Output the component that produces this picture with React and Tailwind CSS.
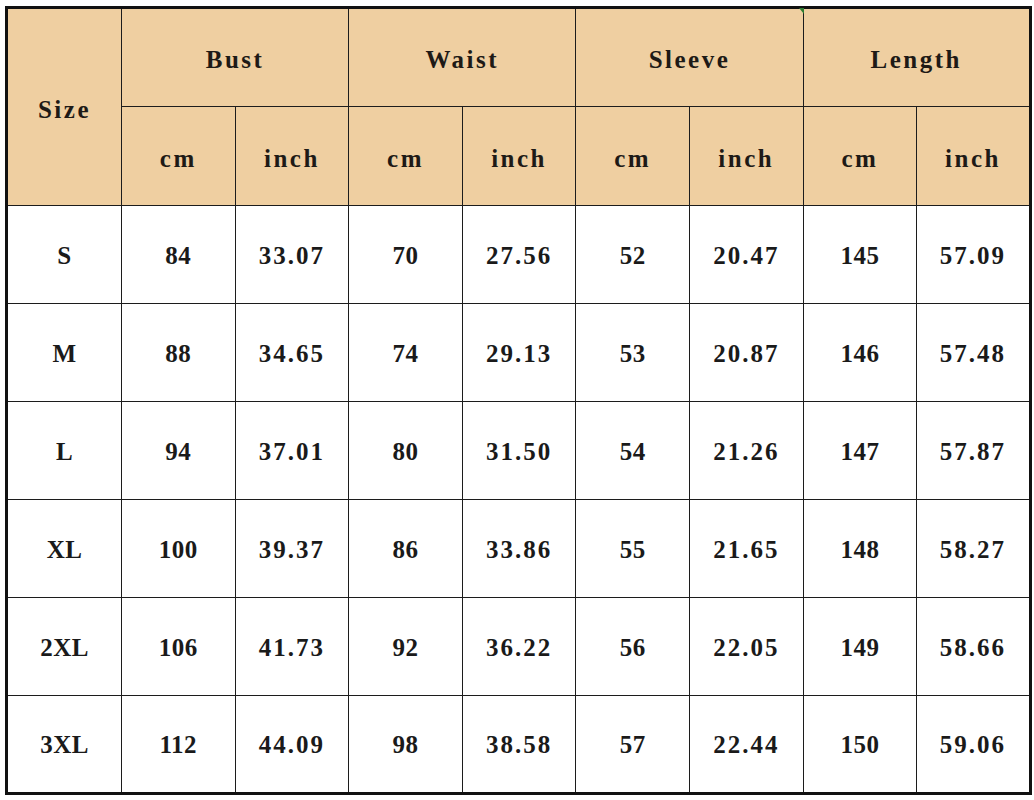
import React from 'react';

const rows = [
  ['S', '84', '33.07', '70', '27.56', '52', '20.47', '145', '57.09'],
  ['M', '88', '34.65', '74', '29.13', '53', '20.87', '146', '57.48'],
  ['L', '94', '37.01', '80', '31.50', '54', '21.26', '147', '57.87'],
  ['XL', '100', '39.37', '86', '33.86', '55', '21.65', '148', '58.27'],
  ['2XL', '106', '41.73', '92', '36.22', '56', '22.05', '149', '58.66'],
  ['3XL', '112', '44.09', '98', '38.58', '57', '22.44', '150', '59.06'],
];

const groups = ['Bust', 'Waist', 'Sleeve', 'Length'];

const cell = 'border border-[#1c1c1c] text-center align-middle';
const head = `${cell} bg-[#efcfa1] text-[25px] font-bold tracking-[2.5px] pt-[5px] text-[#1e1a16]`;

export default function App() {
  return (
    <div className="bg-white w-[1034px] h-[800px] pt-[6px] pl-[5px]" style={{ fontFamily: '"Liberation Serif", serif' }}>
      <div className="relative w-[1024px]">
        <table className="table-fixed border-collapse border-[3px] border-[#111] w-[1024px]">
          <colgroup>
            <col className="w-[115px]" />
            {Array.from({ length: 8 }).map((_, i) => (
              <col key={i} className="w-[113.6px]" />
            ))}
          </colgroup>
          <thead>
            <tr className="h-[99px]">
              <th rowSpan={2} className={head}>Size</th>
              {groups.map((g) => (
                <th key={g} colSpan={2} className={head}>{g}</th>
              ))}
            </tr>
            <tr className="h-[99px]">
              {groups.map((g) => (
                <React.Fragment key={g}>
                  <th className={head}>cm</th>
                  <th className={head}>inch</th>
                </React.Fragment>
              ))}
            </tr>
          </thead>
          <tbody>
            {rows.map((r) => (
              <tr key={r[0]} className="h-[98px]">
                {r.map((v, i) => (
                  <td key={i} className={`${cell} pt-[2px] text-[25px] font-bold text-[#1a1a1a] ${i % 2 === 0 && i > 0 ? 'tracking-[2px]' : 'tracking-[0.5px]'}`}>
                    {v}
                  </td>
                ))}
              </tr>
            ))}
          </tbody>
        </table>
        <div className="absolute left-[794px] top-[2px] w-0 h-0 border-l-[5px] border-l-transparent border-t-[6px] border-t-[#2e7d32]" />
      </div>
    </div>
  );
}
